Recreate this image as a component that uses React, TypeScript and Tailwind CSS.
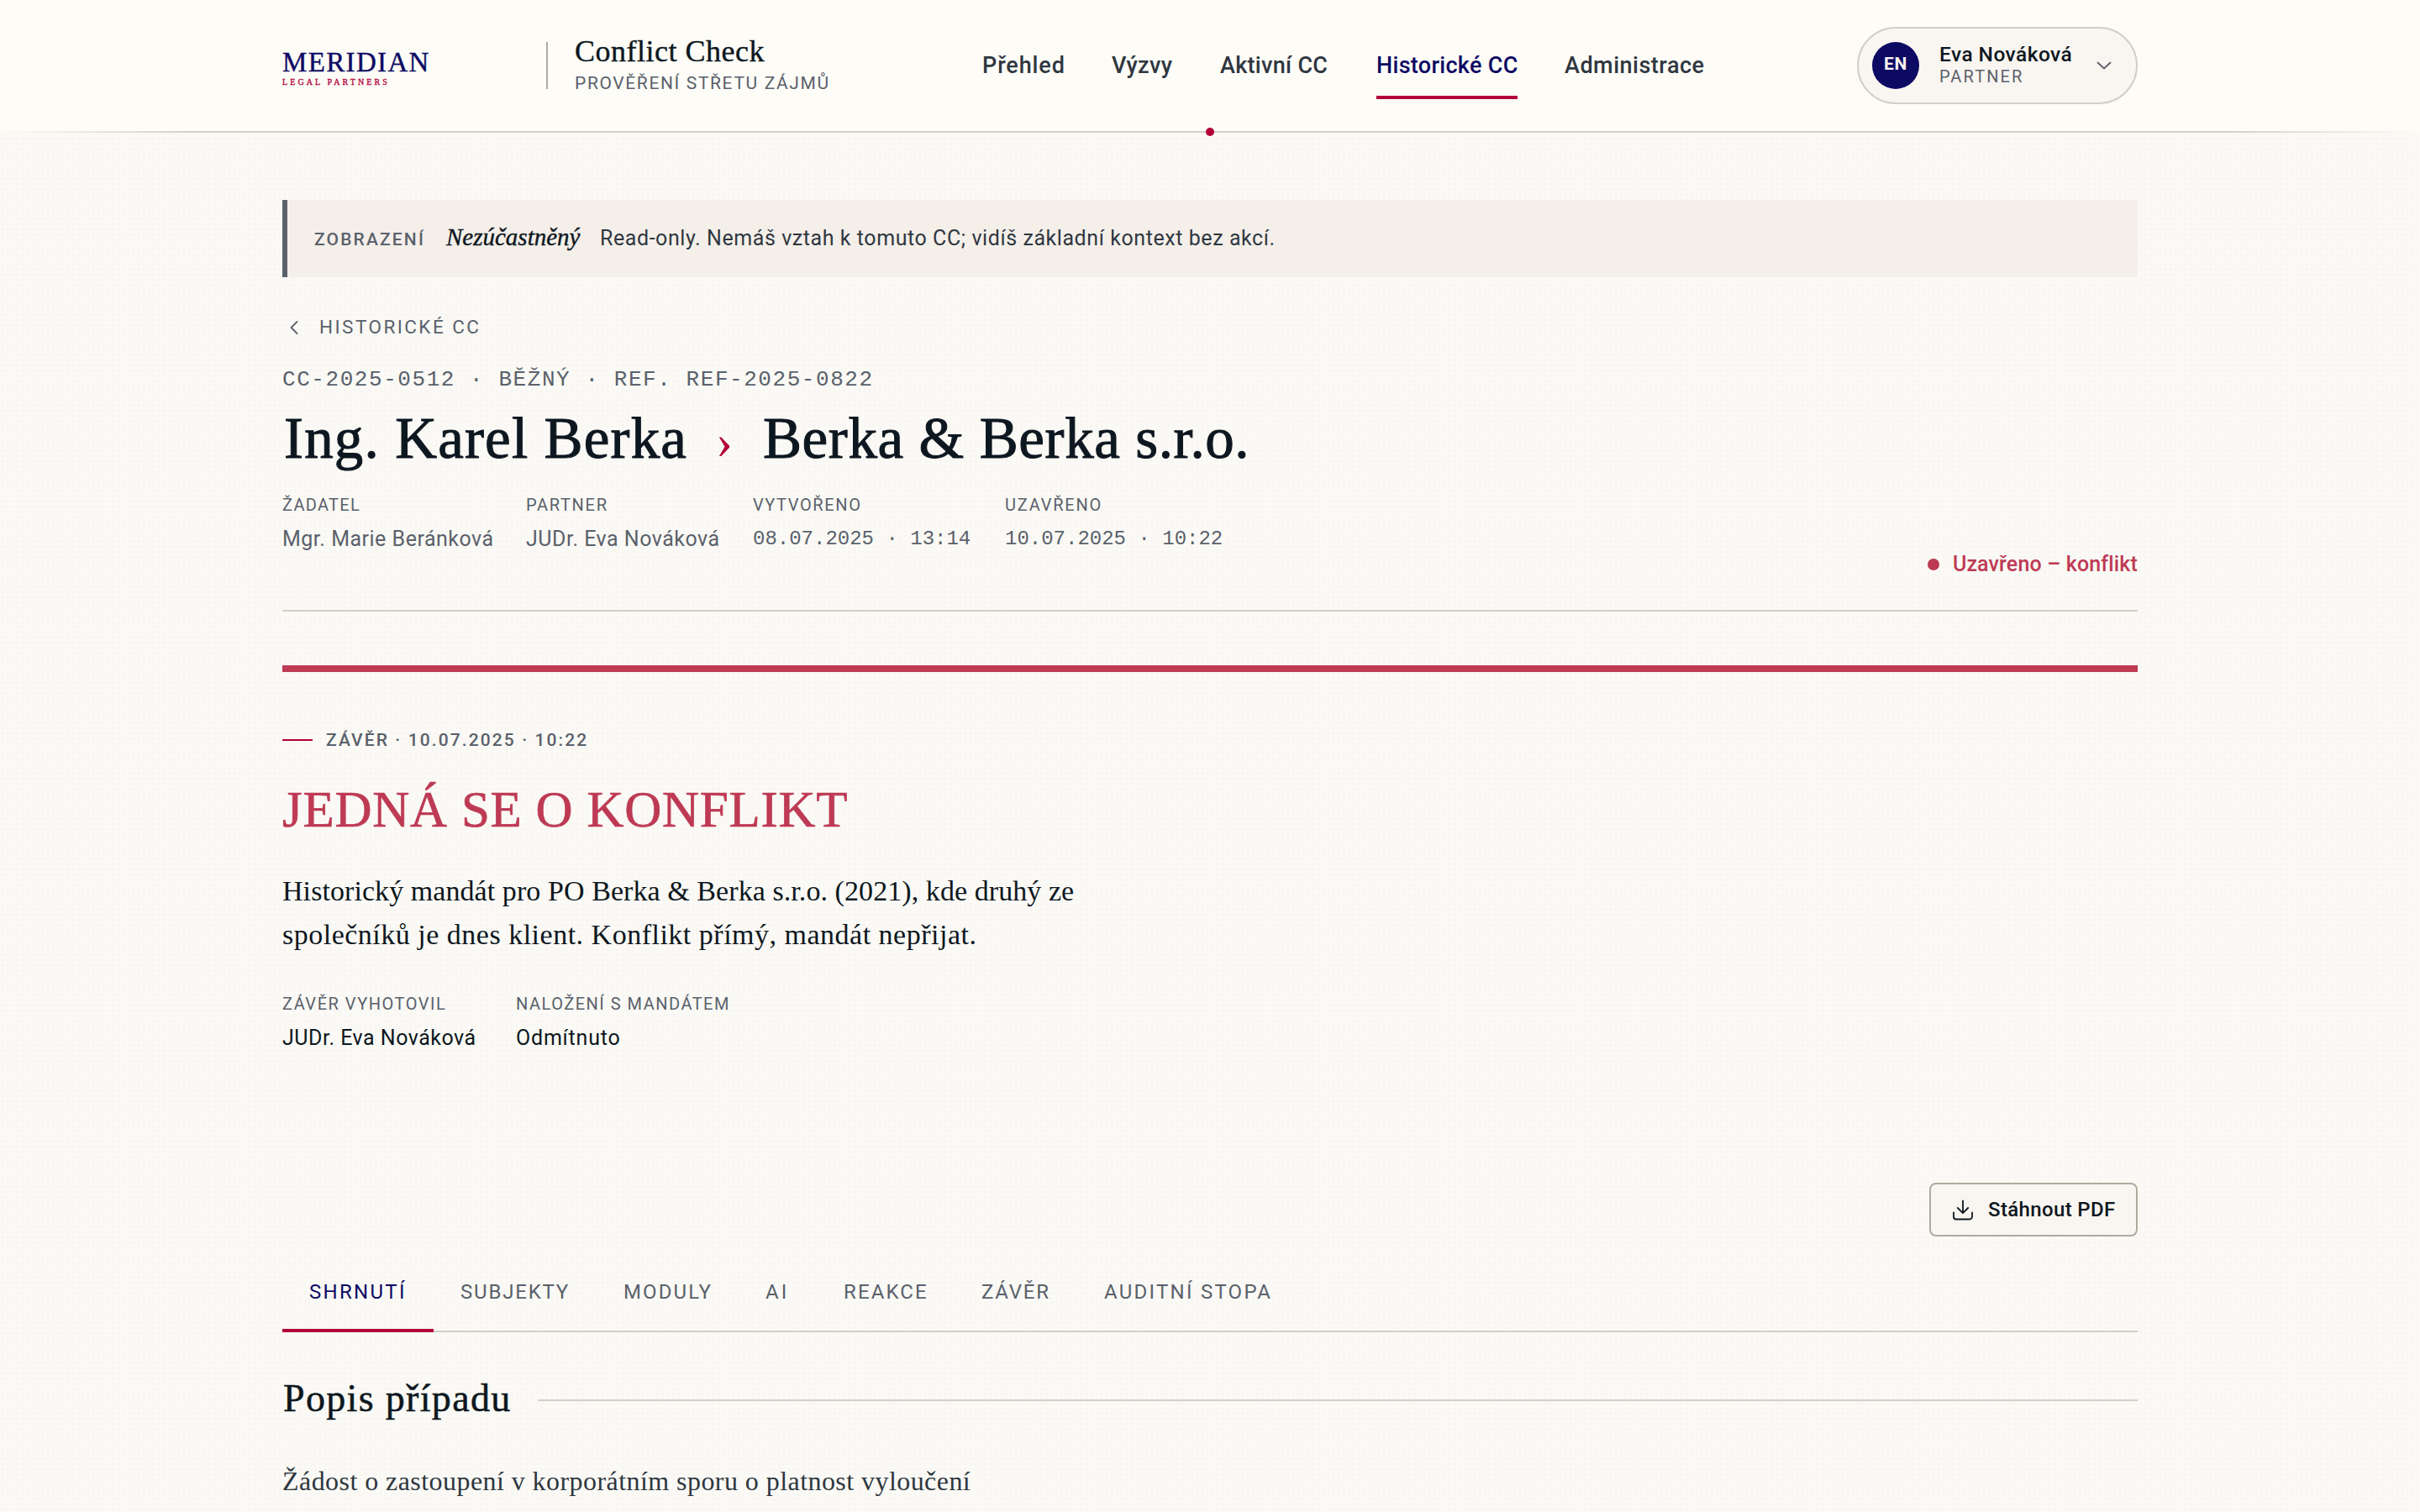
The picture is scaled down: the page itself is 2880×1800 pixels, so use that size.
import clsx from 'clsx';

const NAV = [
  { label: 'Přehled', cls: 'w-[98px] tracking-[0.9px]' },
  { label: 'Výzvy', cls: 'w-[73px] tracking-[0.3px]' },
  { label: 'Aktivní CC', cls: 'w-[130px] tracking-[0.3px]' },
  { label: 'Historické CC', cls: 'w-[168px] tracking-[0.3px]', active: true },
  { label: 'Administrace', cls: 'w-[168px] tracking-[0.5px]' },
];

const TABS = [
  { label: 'Shrnutí', cls: 'w-[180px] tracking-[2.3px]', active: true },
  { label: 'Subjekty', cls: 'w-[194px] tracking-[1.8px]' },
  { label: 'Moduly', cls: 'w-[169px] tracking-[2.1px]' },
  { label: 'AI', cls: 'w-[93px] tracking-[3px]' },
  { label: 'Reakce', cls: 'w-[164px] tracking-[2.1px]' },
  { label: 'Závěr', cls: 'w-[146px] tracking-[1.8px]' },
  { label: 'Auditní stopa', cls: 'tracking-[2.25px]' },
];

const META = [
  { label: 'Žadatel', value: 'Mgr. Marie Beránková', cls: 'w-[250px]', labelCls: 'tracking-[1.3px]' },
  { label: 'Partner', value: 'JUDr. Eva Nováková', cls: 'w-[230px]', labelCls: 'tracking-[1.7px]' },
  { label: 'Vytvořeno', value: '08.07.2025 · 13:14', cls: 'w-[260px]', labelCls: 'tracking-[1.6px]', mono: true },
  { label: 'Uzavřeno', value: '10.07.2025 · 10:22', cls: 'w-[260px]', labelCls: 'tracking-[1.8px]', mono: true },
];

function Header() {
  return (
    <header className="relative bg-[#fdfcf7]">
      <div className="mx-auto flex h-[156px] w-[2208px] items-center">
        {/* Logo */}
        <div className="flex w-[314px] flex-col pt-[13px] font-['Liberation_Serif',serif]">
          <span className="text-[33px] leading-[26px] tracking-[1.35px] text-[#0d0a63] [-webkit-text-stroke:0.4px_#0d0a63]">
            MERIDIAN
          </span>
          <span className="mt-px text-[10px] leading-[20px] tracking-[3.1px] text-[#b30038] [-webkit-text-stroke:0.3px_#b30038]">
            LEGAL PARTNERS
          </span>
        </div>
        <div className="h-14 w-0.5 bg-[#b0a99e]" />
        <div className="ml-8 w-[485px]">
          <div className="font-['Liberation_Serif',serif] text-[36px] leading-[40px] tracking-[0.5px] text-[#0d1720] [-webkit-text-stroke:0.4px_#0d1720]">
            Conflict Check
          </div>
          <div className="mt-0.5 text-[21px] leading-[32px] tracking-[1.63px] text-[#5a616b] uppercase">
            Prověření střetu zájmů
          </div>
        </div>

        <nav className="flex gap-14 text-[27px] font-medium">
          {NAV.map((item) => (
            <a
              key={item.label}
              className={clsx(
                'flex h-20 items-center border-y-4 border-transparent whitespace-nowrap',
                item.cls,
                item.active ? 'border-b-[#b30038] text-[#0d0a63]' : 'text-[#2f3740]',
              )}
            >
              {item.label}
            </a>
          ))}
        </nav>

        {/* User menu */}
        <button className="ml-auto flex h-[92px] w-[334px] items-center rounded-full border-2 border-[#d1d0c5] bg-[#f9f5f1] pr-[26px] pl-4 text-left">
          <span className="flex size-14 items-center justify-center rounded-full bg-[#0d0a63] pb-0.5 text-[21px] font-bold tracking-[0.6px] text-[#f9f5f1]">
            EN
          </span>
          <span className="ml-6 flex flex-col pb-[4px] whitespace-nowrap">
            <span className="text-[24.5px] leading-[30px] font-medium tracking-[0.45px] text-[#0d1720]">Eva Nováková</span>
            <span className="text-[20px] leading-[22px] tracking-[2.1px] text-[#5a616b] uppercase">Partner</span>
          </span>
          <svg className="ml-auto size-6" viewBox="0 0 24 24" fill="none" stroke="#5a616b" strokeWidth="1.8" strokeLinecap="round" strokeLinejoin="round">
            <path d="M4.500 8.500L12 15.500L19.500 8.500" />
          </svg>
        </button>
      </div>
      <div className="h-0.5 bg-[linear-gradient(90deg,transparent,#d6cec6_8%,#d6cec6_92%,transparent)]" />
      <span className="absolute -bottom-1 left-[1435px] size-2.5 rounded-full bg-[#b30038]" />
    </header>
  );
}

export default function App() {
  return (
    <div className="h-screen w-full overflow-hidden bg-[#fbfaf6] bg-[radial-gradient(circle_at_center,rgba(60,60,50,0.014)_1.5px,transparent_2.5px)] bg-[length:6px_6px] font-[Roboto,sans-serif] text-[#0d1720]">
      <Header />

      <main className="mx-auto w-[2208px] pt-20">
        {/* Role banner */}
        <div className="flex h-[92px] items-baseline border-l-6 border-[#5a616b] bg-[#f5efea] pl-8 whitespace-nowrap">
          <span className="w-[157px] text-[21px] leading-[40px] font-medium tracking-[2.15px] text-[#5a616b] uppercase">Zobrazení</span>
          <em className="w-[183px] font-['Liberation_Serif',serif] text-[29px] leading-[40px] [-webkit-text-stroke:0.4px_#0d1720]">Nezúčastněný</em>
          <span className="text-[25px] leading-[92px] tracking-[0.57px] text-[#2f3740]">
            Read-only. Nemáš vztah k tomuto CC; vidíš základní kontext bez akcí.
          </span>
        </div>

        <a className="mt-10 flex h-10 items-center text-[22.5px] tracking-[2.45px] text-[#5a616b] uppercase">
          <svg className="mr-4 size-7" viewBox="0 0 28 28" fill="none" stroke="currentColor" strokeWidth="1.8" strokeLinecap="round" strokeLinejoin="round">
            <path d="M17.500 7L10.500 14L17.500 21" />
          </svg>
          Historické CC
        </a>

        {/* Case heading */}
        <div className="flex items-end justify-between border-b-2 border-[#d1d0c5] pb-[37px]">
          <div className="pb-[30px]">
            <div className="mt-[22px] font-['Liberation_Mono',monospace] text-[26px] leading-[40px] tracking-[1.56px] text-[#5a616b] uppercase">
              CC-2025-0512 · Běžný · Ref. REF-2025-0822
            </div>
            <h1 className="mt-3 flex h-[76px] items-baseline font-['Liberation_Serif',serif] text-[69px] leading-[76px] whitespace-nowrap [-webkit-text-stroke:1px_#0d1720]">
              <span className="w-[516px] pl-0.5 tracking-[1.15px]">Ing. Karel Berka</span>
              <span className="w-14 text-[60px] leading-[40px] text-[#b30038] [-webkit-text-stroke:0px]">›</span>
              <span className="tracking-[0.6px]">Berka &amp; Berka s.r.o.</span>
            </h1>
            <div className="mt-[26px] flex gap-10 text-[#5a616b]">
              {META.map((m) => (
                <div key={m.label} className={clsx('whitespace-nowrap', m.cls)}>
                  <div className={clsx('text-[20px] leading-[30px] uppercase', m.labelCls)}>{m.label}</div>
                  <div
                    className={clsx(
                      'mt-[9px] leading-[34px]',
                      m.mono ? "font-['Liberation_Mono',monospace] text-[24px]" : 'text-[25px] tracking-[0.5px]',
                    )}
                  >
                    {m.value}
                  </div>
                </div>
              ))}
            </div>
          </div>
          <div className="flex items-center gap-4 text-[25px] leading-[34px] font-medium tracking-[0.15px] text-[#be3a54]">
            <span className="size-3.5 rounded-full bg-[#be3a54]" />
            Uzavřeno – konflikt
          </div>
        </div>

        {/* Conclusion */}
        <section className="mt-16 border-t-8 border-[#be3a54] pt-[66px]">
          <div className="flex items-center gap-4 text-[21px] leading-[30px] font-medium tracking-[2.1px] text-[#5a616b]">
            <span className="h-0.5 w-9 bg-[#b30038]" />
            ZÁVĚR · 10.07.2025 · 10:22
          </div>
          <h2 className="mt-8 font-['Liberation_Serif',serif] text-[61px] leading-[72px] tracking-[0.75px] text-[#be3a54] [-webkit-text-stroke:0.7px_#be3a54]">
            JEDNÁ SE O KONFLIKT
          </h2>
          <p className="mt-[35px] font-['Liberation_Serif',serif] text-[34px] leading-[52px]">
            <span className="tracking-[0.07px]">Historický mandát pro PO Berka &amp; Berka s.r.o. (2021), kde druhý ze</span>
            <br />
            <span className="tracking-[0.5px]">společníků je dnes klient. Konflikt přímý, mandát nepřijat.</span>
          </p>
          <div className="mt-[41px] flex whitespace-nowrap">
            <div className="w-[278px]">
              <div className="text-[20px] leading-[30px] tracking-[1.53px] text-[#5a616b] uppercase">Závěr vyhotovil</div>
              <div className="mt-[9px] text-[25px] leading-[34px] tracking-[0.5px]">JUDr. Eva Nováková</div>
            </div>
            <div>
              <div className="text-[20px] leading-[30px] tracking-[1.5px] text-[#5a616b] uppercase">Naložení s mandátem</div>
              <div className="mt-[9px] text-[25px] leading-[34px] tracking-[0.8px]">Odmítnuto</div>
            </div>
          </div>
        </section>

        <button className="mt-[155px] ml-auto flex h-16 w-[248px] items-center gap-4 rounded-lg border-2 border-[#b0a99e] bg-[#f9f5f1] pl-6 text-[24px] font-medium tracking-[0.36px] whitespace-nowrap">
          <svg className="size-7" viewBox="0 0 28 28" fill="none" stroke="currentColor" strokeWidth="1.8" strokeLinecap="round" strokeLinejoin="round">
            <path d="M14 3.500V18M7.800 12L14 18.200L20.200 12" />
            <path d="M3 17.500V22.500A3 3 0 0 0 6 25.500H22A3 3 0 0 0 25 22.500V17.500" />
          </svg>
          Stáhnout PDF
        </button>

        <div className="mt-[18px] flex h-24 border-b-2 border-[#d1d0c5] text-[24px] uppercase">
          {TABS.map((tab) => (
            <a
              key={tab.label}
              className={clsx(
                '-mb-0.5 flex h-24 items-center border-y-4 border-transparent pl-8 whitespace-nowrap',
                tab.cls,
                tab.active ? 'border-b-[#b30038] text-[#0d0a63]' : 'text-[#5a616b]',
              )}
            >
              {tab.label}
            </a>
          ))}
        </div>

        {/* Case description */}
        <section className="mt-[49px]">
          <div className="flex items-center">
            <h2 className="w-[304px] pl-px font-['Liberation_Serif',serif] text-[46px] leading-[60px] tracking-[1.33px] whitespace-nowrap [-webkit-text-stroke:0.5px_#0d1720]">
              Popis případu
            </h2>
            <div className="mt-1 h-0.5 flex-1 bg-[#d1d0c5]" />
          </div>
          <p className="mt-11 font-['Liberation_Serif',serif] text-[32px] leading-[48px] tracking-[0.44px] text-[#2f3740]">
            Žádost o zastoupení v korporátním sporu o platnost vyloučení
          </p>
        </section>
      </main>
    </div>
  );
}
